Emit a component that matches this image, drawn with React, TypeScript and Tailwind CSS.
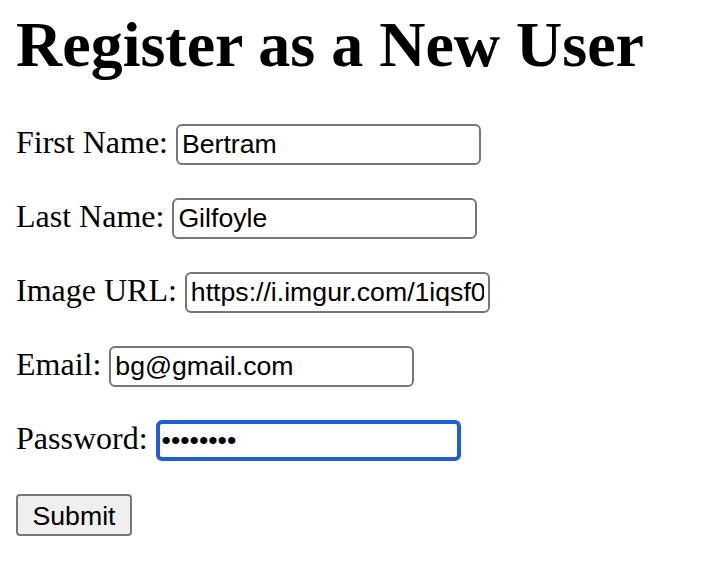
const FIELDS: { label: string; value: string; type: string; focused?: boolean }[] = [
  { label: 'First Name:', value: 'Bertram', type: 'text' },
  { label: 'Last Name:', value: 'Gilfoyle', type: 'text' },
  { label: 'Image URL:', value: 'https://i.imgur.com/1iqsf0x.png', type: 'text' },
  { label: 'Email:', value: 'bg@gmail.com', type: 'email' },
  { label: 'Password:', value: 'password', type: 'password', focused: true },
]

export default function App() {
  return (
    <div className="min-h-[588px] bg-white px-4 text-black" style={{ fontFamily: '"Liberation Serif", "Times New Roman", serif' }}>
      <h1 className="mt-[8px] text-[64px] font-bold leading-[normal]">Register as a New User</h1>

      <form className="mt-[42px] flex flex-col gap-[33px]" onSubmit={e => e.preventDefault()}>
        {FIELDS.map(f => (
          <div key={f.label} className="flex items-baseline text-[32px] leading-[normal]">
            <label className="whitespace-pre">{f.label} </label>
            <input
              type={f.type}
              defaultValue={f.value}
              readOnly
              className={`h-[41px] w-[305px] rounded-[6px] bg-white text-[26.67px] text-black outline-none ${
                f.focused ? 'border-[4px] border-[#1f5fcf] px-[2px]' : 'border-2 border-[#767676] px-[4px]'
              }`}
              style={{ fontFamily: '"Liberation Sans", Arial, sans-serif' }}
            />
          </div>
        ))}
        <div>
          <button
            type="submit"
            className="h-[42px] w-[116px] rounded-[4px] border-2 border-[#767676] bg-[#efefef] text-[26.67px] text-black"
            style={{ fontFamily: '"Liberation Sans", Arial, sans-serif' }}
          >
            Submit
          </button>
        </div>
      </form>
    </div>
  )
}
